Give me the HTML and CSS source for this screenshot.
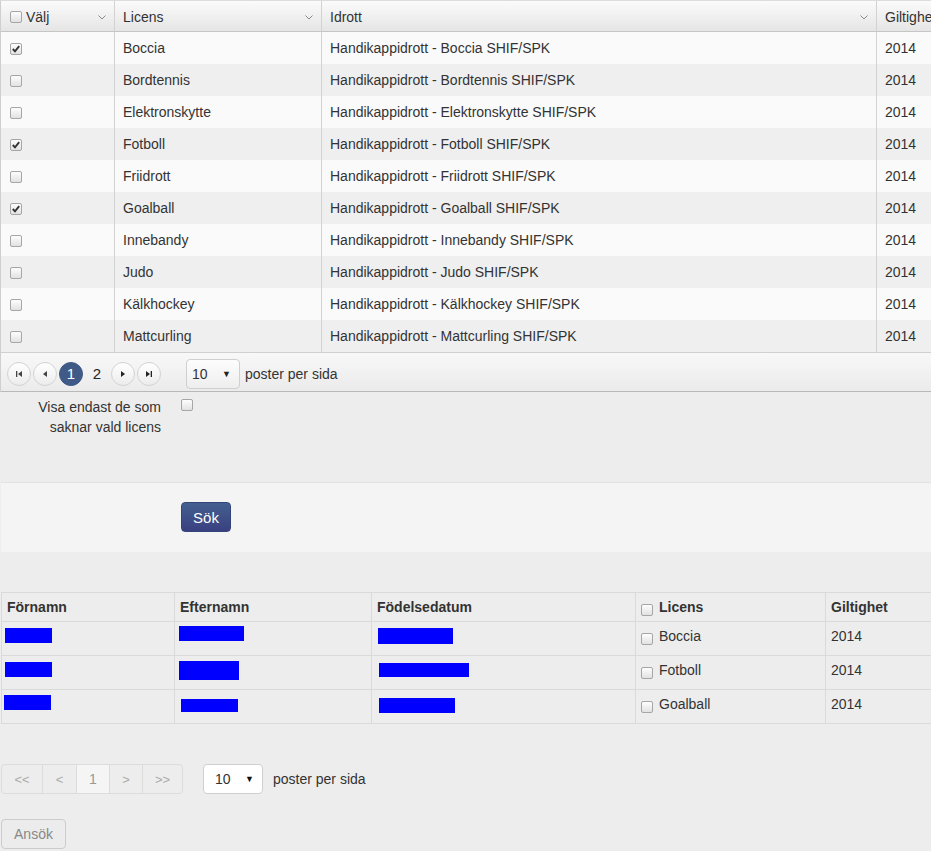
FILE: index.html
```html
<!DOCTYPE html>
<html lang="sv">
<head>
<meta charset="utf-8">
<title>Licenser</title>
<link rel="stylesheet" href="styles.css">
</head>
<body>
<div class="kgrid">
  <table class="kt">
    <thead>
      <tr>
        <th class="w1"><div class="hc"><span class="hl"><span class="cb"></span>Välj</span><svg class="chev" width="8" height="5" viewBox="0 0 8 5"><polyline points="0.5,0.5 4,4 7.5,0.5" fill="none" stroke="#8a8a8a" stroke-width="1"/></svg></div></th>
        <th class="w2"><div class="hc"><span class="hl">Licens</span><svg class="chev" width="8" height="5" viewBox="0 0 8 5"><polyline points="0.5,0.5 4,4 7.5,0.5" fill="none" stroke="#8a8a8a" stroke-width="1"/></svg></div></th>
        <th class="w3"><div class="hc"><span class="hl">Idrott</span><svg class="chev" width="8" height="5" viewBox="0 0 8 5"><polyline points="0.5,0.5 4,4 7.5,0.5" fill="none" stroke="#8a8a8a" stroke-width="1"/></svg></div></th>
        <th class="w4"><div class="hc"><span class="hl">Giltighet</span></div></th>
      </tr>
    </thead>
    <tbody>
      <tr><td><span class="cb on"><svg width="10" height="10" viewBox="0 0 10 10"><polyline points="1.8,5 4,7.4 8.2,2.2" fill="none" stroke="#333" stroke-width="1.9"/></svg></span></td><td>Boccia</td><td>Handikappidrott - Boccia SHIF/SPK</td><td>2014</td></tr>
      <tr><td><span class="cb"></span></td><td>Bordtennis</td><td>Handikappidrott - Bordtennis SHIF/SPK</td><td>2014</td></tr>
      <tr><td><span class="cb"></span></td><td>Elektronskytte</td><td>Handikappidrott - Elektronskytte SHIF/SPK</td><td>2014</td></tr>
      <tr><td><span class="cb on"><svg width="10" height="10" viewBox="0 0 10 10"><polyline points="1.8,5 4,7.4 8.2,2.2" fill="none" stroke="#333" stroke-width="1.9"/></svg></span></td><td>Fotboll</td><td>Handikappidrott - Fotboll SHIF/SPK</td><td>2014</td></tr>
      <tr><td><span class="cb"></span></td><td>Friidrott</td><td>Handikappidrott - Friidrott SHIF/SPK</td><td>2014</td></tr>
      <tr><td><span class="cb on"><svg width="10" height="10" viewBox="0 0 10 10"><polyline points="1.8,5 4,7.4 8.2,2.2" fill="none" stroke="#333" stroke-width="1.9"/></svg></span></td><td>Goalball</td><td>Handikappidrott - Goalball SHIF/SPK</td><td>2014</td></tr>
      <tr><td><span class="cb"></span></td><td>Innebandy</td><td>Handikappidrott - Innebandy SHIF/SPK</td><td>2014</td></tr>
      <tr><td><span class="cb"></span></td><td>Judo</td><td>Handikappidrott - Judo SHIF/SPK</td><td>2014</td></tr>
      <tr><td><span class="cb"></span></td><td>Kälkhockey</td><td>Handikappidrott - Kälkhockey SHIF/SPK</td><td>2014</td></tr>
      <tr><td><span class="cb"></span></td><td>Mattcurling</td><td>Handikappidrott - Mattcurling SHIF/SPK</td><td>2014</td></tr>
    </tbody>
  </table>
  <div class="kpager">
    <span class="pb"><svg width="8" height="8" viewBox="0 0 8 8"><rect x="1" y="1" width="1.3" height="6" fill="#444"/><polygon points="7,1 7,7 3,4" fill="#444"/></svg></span>
    <span class="pb"><svg width="8" height="8" viewBox="0 0 8 8"><polygon points="6,1 6,7 2,4" fill="#444"/></svg></span>
    <span class="pb pcur">1</span>
    <span class="pb pnum">2</span>
    <span class="pb"><svg width="8" height="8" viewBox="0 0 8 8"><polygon points="2,1 2,7 6,4" fill="#222"/></svg></span>
    <span class="pb"><svg width="8" height="8" viewBox="0 0 8 8"><polygon points="1,1 1,7 5,4" fill="#222"/><rect x="5.7" y="1" width="1.3" height="6" fill="#222"/></svg></span>
    <span class="ksel"><span>10</span><span class="tri">▼</span></span>
    <span class="ptxt">poster per sida</span>
  </div>
</div>

<div class="filter">
  <div class="flabel">Visa endast de som saknar vald licens</div>
  <span class="cb fcb"></span>
</div>

<div class="panel">
  <button class="sok">Sök</button>
</div>

<table class="rt">
  <thead>
    <tr>
      <th class="r1">Förnamn</th>
      <th class="r2">Efternamn</th>
      <th class="r3">Födelsedatum</th>
      <th class="r4"><span class="cb rcb"></span>Licens</th>
      <th class="r5">Giltighet</th>
    </tr>
  </thead>
  <tbody>
    <tr>
      <td><span class="rd f1"></span></td>
      <td><span class="rd e1"></span></td>
      <td><span class="rd d1"></span></td>
      <td><span class="cb rcb"></span>Boccia</td>
      <td>2014</td>
    </tr>
    <tr>
      <td><span class="rd f2"></span></td>
      <td><span class="rd e2"></span></td>
      <td><span class="rd d2"></span></td>
      <td><span class="cb rcb"></span>Fotboll</td>
      <td>2014</td>
    </tr>
    <tr>
      <td><span class="rd f3"></span></td>
      <td><span class="rd e3"></span></td>
      <td><span class="rd d3"></span></td>
      <td><span class="cb rcb"></span>Goalball</td>
      <td>2014</td>
    </tr>
  </tbody>
</table>

<div class="bpager">
  <div class="pg">
    <span class="pgi g1">&lt;&lt;</span>
    <span class="pgi g2">&lt;</span>
    <span class="pgi g3 gcur">1</span>
    <span class="pgi g4">&gt;</span>
    <span class="pgi g5">&gt;&gt;</span>
  </div>
  <span class="bsel"><span>10</span><span class="btri">▼</span></span>
  <span class="btxt">poster per sida</span>
</div>

<button class="ansok">Ansök</button>
</body>
</html>
```

FILE: styles.css
```css
html, body {
  margin: 0;
  overflow: hidden;
}
body {
  width: 931px;
  height: 851px;
  background: #ededed;
  font-family: "Liberation Sans", Arial, sans-serif;
  font-size: 14px;
  color: #333;
}

/* checkbox */
.cb {
  display: inline-flex;
  align-items: center;
  justify-content: center;
  width: 12px;
  height: 12px;
  box-sizing: border-box;
  border: 1px solid #a6a6a6;
  border-radius: 2px;
  background: linear-gradient(#fdfdfd, #e2e2e2);
  vertical-align: middle;
}

/* top kendo-like grid */
.kgrid {
  width: 1000px;
  border-left: 1px solid #cfcfcf;
  border-top: 1px solid #dcdcdc;
}
.kt {
  width: 999px;
  border-spacing: 0;
  table-layout: fixed;
}
.kt th, .kt td {
  box-sizing: border-box;
  text-align: left;
  white-space: nowrap;
  overflow: hidden;
}
.kt th {
  height: 31px;
  padding: 2px 8px 0;
  font-weight: normal;
  border-bottom: 1px solid #c5c5c5;
  background: linear-gradient(#fbfbfb, #e5e5e5);
}
.kt th + th, .kt td + td {
  border-left: 1px solid #d2d2d2;
}
.w1 { width: 113px; }
.w2 { width: 207px; }
.w3 { width: 555px; }
.w4 { width: 124px; }
.hc {
  display: flex;
  align-items: center;
  justify-content: space-between;
}
.hl {
  display: flex;
  align-items: center;
}
.hl .cb {
  margin: 0 4px 0 1px;
}
.chev {
  flex: none;
}
.kt td {
  height: 32px;
  padding: 0 8px;
  background: #fafafa;
}
.kt td:first-child .cb {
  margin-left: 1px;
}
.kt tbody tr:nth-child(even) td {
  background: #efefef;
}

.kpager {
  height: 40px;
  box-sizing: border-box;
  padding: 3px 0 0 6px;
  display: flex;
  align-items: center;
  border-top: 1px solid #d0d0d0;
  border-bottom: 1px solid #b9b9b9;
  background: linear-gradient(#f8f8f8, #ebebeb);
}
.pb {
  width: 24px;
  height: 24px;
  box-sizing: border-box;
  margin-right: 2px;
  border: 1px solid #d3d3d3;
  border-radius: 50%;
  background: linear-gradient(#ffffff, #ececec);
  display: flex;
  align-items: center;
  justify-content: center;
}
.pcur {
  background: #3f5a87;
  border-color: #3f5a87;
  color: #fff;
  font-size: 15px;
}
.pnum {
  border: none;
  background: none;
  font-size: 15px;
  color: #222;
}
.ksel {
  margin-left: 23px;
  width: 54px;
  height: 30px;
  box-sizing: border-box;
  padding: 0 8px 0 5px;
  border: 1px solid #cfcfcf;
  border-radius: 4px;
  background: linear-gradient(#fdfdfd, #eeeeee);
  display: flex;
  align-items: center;
  justify-content: space-between;
  font-size: 14px;
}
.tri {
  font-size: 9px;
  color: #222;
}
.ptxt {
  margin-left: 5px;
}

/* filter */
.filter {
  height: 90px;
  box-sizing: border-box;
  padding-top: 5px;
  display: flex;
  align-items: flex-start;
}
.flabel {
  width: 140px;
  margin-left: 21px;
  text-align: right;
  line-height: 20px;
}
.fcb {
  margin: 2px 0 0 20px;
}

.panel {
  margin-left: 1px;
  height: 70px;
  box-sizing: border-box;
  padding: 19px 0 0 180px;
  border-top: 1px solid #e2e2e2;
  background: #f4f4f4;
}
.sok {
  width: 50px;
  height: 30px;
  border: 1px solid #34457a;
  border-radius: 4px;
  background: linear-gradient(#43608f, #3a4081);
  color: #fff;
  font-family: "Liberation Sans", Arial, sans-serif;
  font-size: 15px;
  padding: 0;
}

/* results table */
.rt {
  margin: 40px 0 0 1px;
  width: 1000px;
  border-spacing: 0;
  table-layout: fixed;
  border-bottom: 1px solid #dadada;
}
.rt th, .rt td {
  box-sizing: border-box;
  text-align: left;
  vertical-align: top;
  line-height: 20px;
  padding: 4px 5px 0;
  border-left: 1px solid #dadada;
  border-top: 1px solid #dadada;
  white-space: nowrap;
}
.rt th {
  height: 29px;
  font-weight: bold;
}
.rt td {
  height: 34px;
}
.r1 { width: 173px; }
.r2 { width: 197px; }
.r3 { width: 264px; }
.r4 { width: 190px; }
.r5 { width: 176px; }
.rcb {
  vertical-align: top;
  margin: 7px 6px 0 0;
}
.rd {
  display: block;
  height: 15px;
  background: #0000ff;
}
.f1 { width: 47px; margin: 2px 0 0 -2px; }
.e1 { width: 65px; margin: 0 0 0 -1px; }
.d1 { width: 75px; height: 16px; margin: 2px 0 0 1px; }
.f2 { width: 47px; margin: 2px 0 0 -2px; }
.e2 { width: 60px; height: 19px; margin: 1px 0 0 -1px; }
.d2 { width: 90px; height: 14px; margin: 3px 0 0 2px; }
.f3 { width: 47px; margin: 1px 0 0 -3px; }
.e3 { width: 57px; height: 13px; margin: 5px 0 0 1px; }
.d3 { width: 76px; margin: 4px 0 0 2px; }

/* bottom pager */
.bpager {
  margin: 40px 0 0 1px;
  display: flex;
  align-items: center;
  height: 30px;
}
.pg {
  display: flex;
  height: 30px;
  box-sizing: border-box;
  border: 1px solid #dcdcdc;
  border-radius: 4px;
  overflow: hidden;
}
.pgi {
  display: flex;
  align-items: center;
  justify-content: center;
  color: #aaa;
  font-size: 13px;
  box-sizing: border-box;
}
.pgi + .pgi {
  border-left: 1px solid #dcdcdc;
}
.g1 { width: 40px; }
.g2 { width: 34px; }
.g3 { width: 33px; }
.g4 { width: 33px; }
.g5 { width: 40px; }
.gcur {
  background: #f5f5f5;
  color: #999;
  font-size: 14px;
}
.bsel {
  margin-left: 20px;
  width: 60px;
  height: 30px;
  box-sizing: border-box;
  padding: 0 8px 0 11px;
  background: #fff;
  border: 1px solid #cfcfcf;
  border-radius: 4px;
  display: flex;
  align-items: center;
  justify-content: space-between;
}
.btri {
  font-size: 9px;
  color: #111;
}
.btxt {
  margin-left: 10px;
}

.ansok {
  display: block;
  margin: 25px 0 0 1px;
  width: 65px;
  height: 30px;
  border: 1px solid #cccccc;
  border-radius: 4px;
  background: #ececec;
  color: #888;
  font-family: "Liberation Sans", Arial, sans-serif;
  font-size: 14px;
  padding: 0;
}
```
